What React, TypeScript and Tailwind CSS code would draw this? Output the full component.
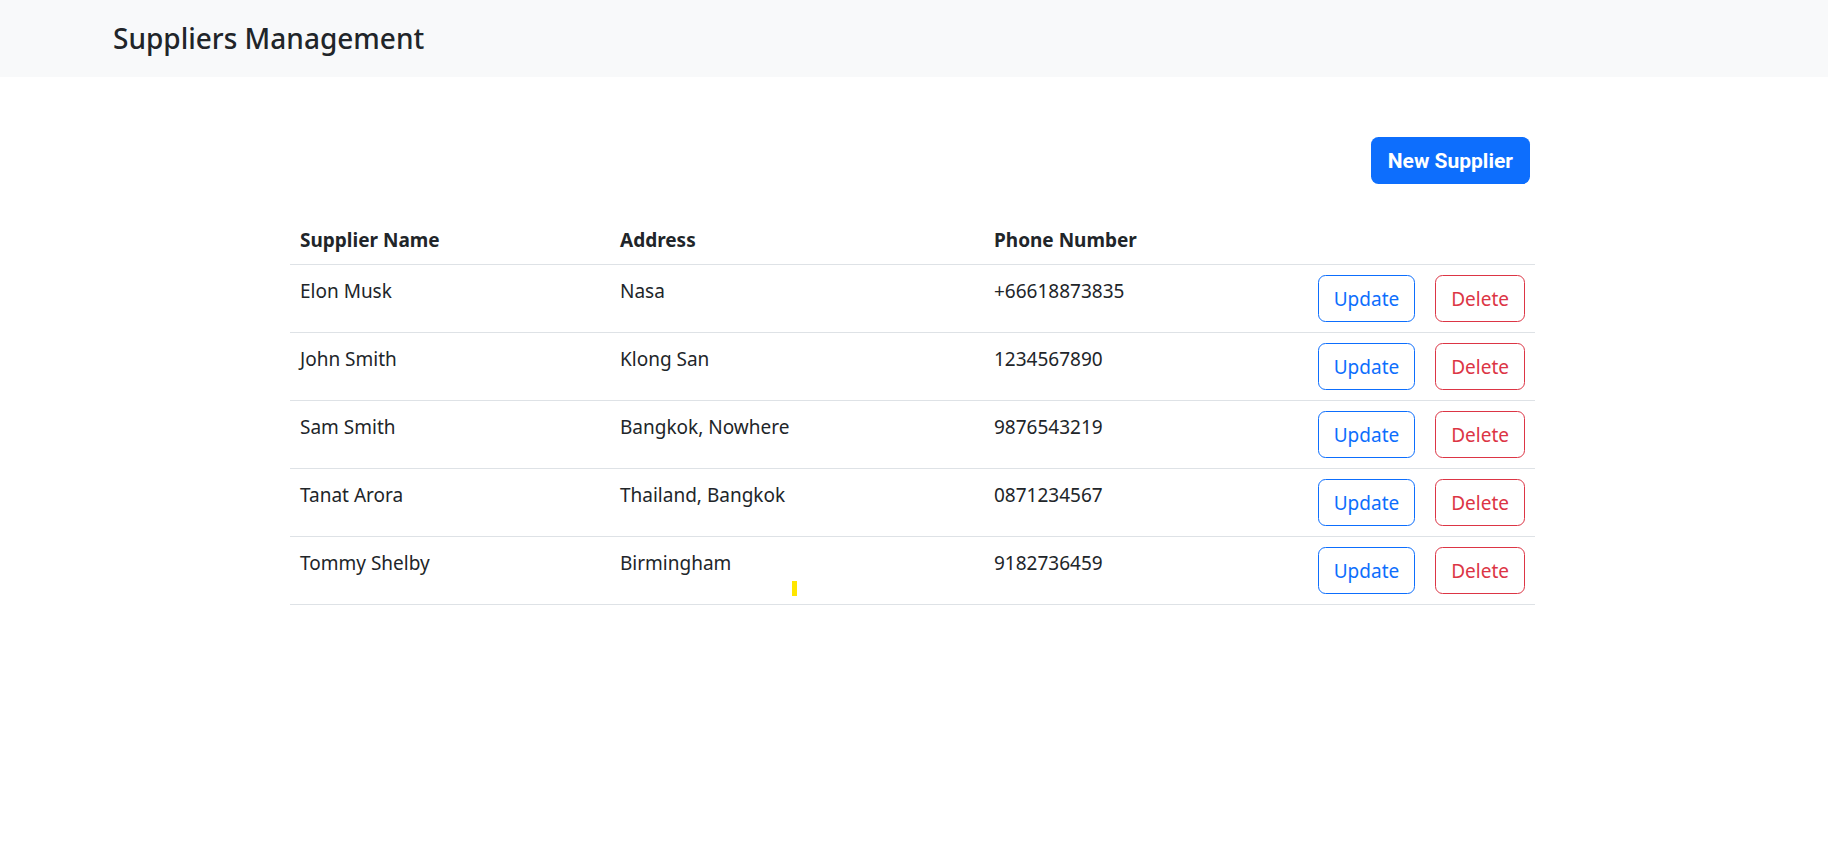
import { FC } from 'react'

type Supplier = {
  id: number
  name: string
  address: string
  phone: string
}

const suppliers: Supplier[] = [
  { id: 1, name: 'Elon Musk', address: 'Nasa', phone: '+66618873835' },
  { id: 2, name: 'John Smith', address: 'Klong San', phone: '1234567890' },
  { id: 3, name: 'Sam Smith', address: 'Bangkok, Nowhere', phone: '9876543219' },
  { id: 4, name: 'Tanat Arora', address: 'Thailand, Bangkok', phone: '0871234567' },
  { id: 5, name: 'Tommy Shelby', address: 'Birmingham', phone: '9182736459' }
]

const SupplierRow: FC<{ supplier: Supplier }> = ({ supplier }) => {
  return (
    <tr className="border-b border-[#dee2e6]">
      <td className="px-[10px] pt-[11px] pb-[9px] align-top">{supplier.name}</td>
      <td className="px-[10px] pt-[11px] pb-[9px] align-top">{supplier.address}</td>
      <td className="px-[10px] pt-[11px] pb-[9px] align-top">{supplier.phone}</td>
      <td className="p-[10px] align-top">
        <div className="flex justify-end gap-[20px]">
          <button className="h-[47px] rounded-[7.5px] border border-[#0d6efd] px-[15px] text-[#0d6efd]">
            Update
          </button>
          <button className="h-[47px] rounded-[7.5px] border border-[#dc3545] px-[15px] text-[#dc3545]">
            Delete
          </button>
        </div>
      </td>
    </tr>
  )
}

export default function App() {
  return (
    <div className="min-h-[867px] bg-white font-['Noto_Sans',sans-serif] text-[19px] leading-[30px] text-[#212529]">
      <nav className="flex h-[77px] items-center bg-[#f8f9fa] pl-[113px]">
        <span className="text-[28px] font-medium leading-[45px]">Suppliers Management</span>
      </nav>

      <main className="ml-[290px] w-[1245px] pt-[60px]">
        <div className="flex justify-end pr-[5px]">
          <button className="h-[47px] rounded-[7.5px] bg-[#0d6efd] px-[17px] font-['Roboto',sans-serif] text-[21px] font-bold text-white">
            New Supplier
          </button>
        </div>

        <table className="mt-[30px] w-full border-collapse text-left">
          <thead>
            <tr className="border-b border-[#dee2e6]">
              <th className="w-[320px] px-[10px] pt-[11px] pb-[9px] font-bold">Supplier Name</th>
              <th className="w-[374px] px-[10px] pt-[11px] pb-[9px] font-bold">Address</th>
              <th className="px-[10px] pt-[11px] pb-[9px] font-bold">Phone Number</th>
              <th className="p-[10px]"></th>
            </tr>
          </thead>
          <tbody>
            {suppliers.map(s => (
              <SupplierRow key={s.id} supplier={s} />
            ))}
          </tbody>
        </table>

        <div className="relative">
          <span className="absolute left-[502px] top-[-24px] h-[15px] w-[5px] bg-[#ffe600]"></span>
        </div>
      </main>
    </div>
  )
}
